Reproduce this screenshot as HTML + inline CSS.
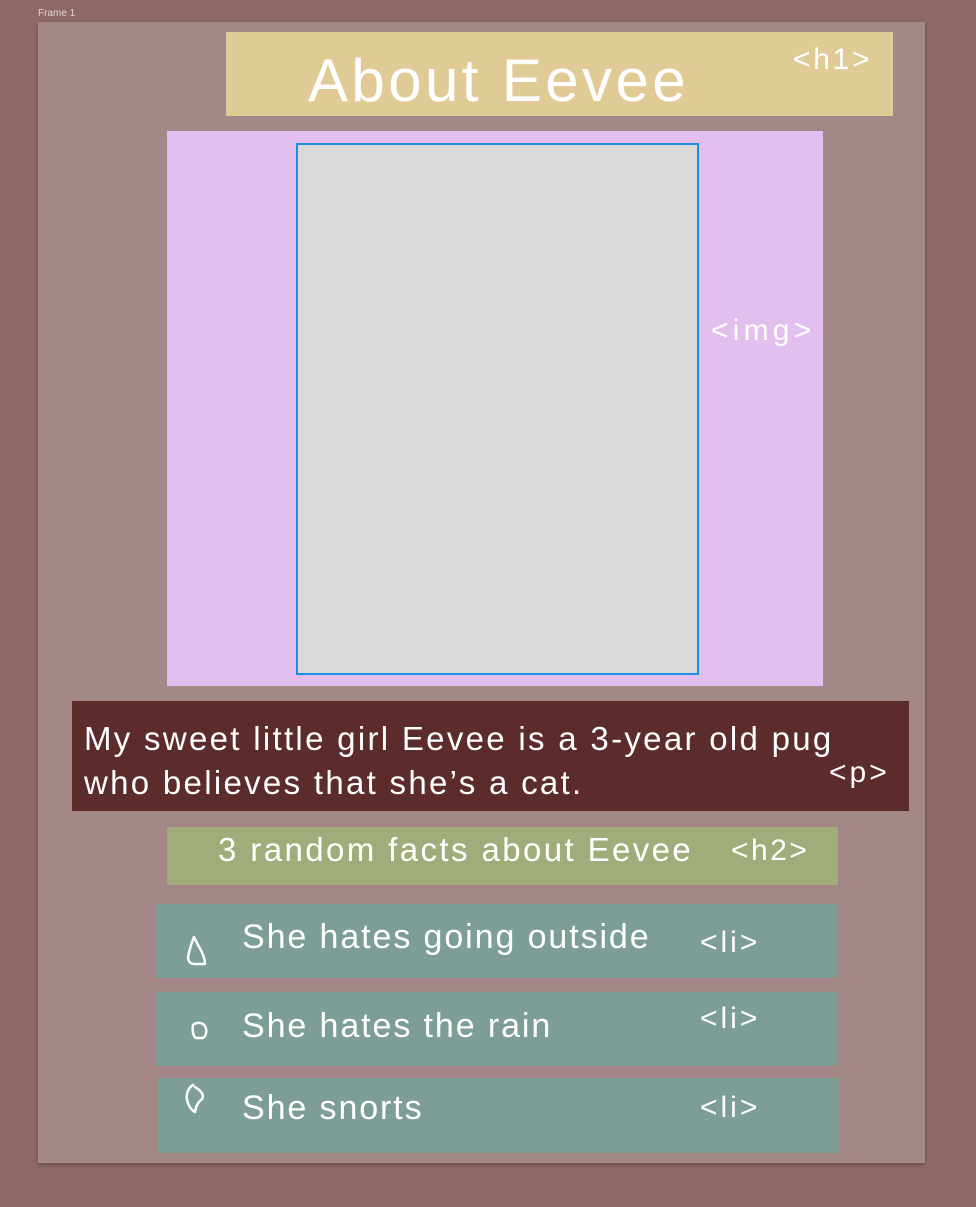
<!DOCTYPE html>
<html><head><meta charset="utf-8"><style>
body{margin:0;width:976px;height:1207px;background:#8d6866;position:relative;overflow:hidden;font-family:"Liberation Sans",sans-serif;color:#fff}
div{position:absolute;box-sizing:border-box}
.t{position:absolute;white-space:nowrap}
</style></head><body>
<div class="t" style="left:38px;top:8px;font-size:10px;color:#e2d3d3">Frame 1</div>
<div style="left:38px;top:22px;width:887px;height:1141px;background:#a48888;box-shadow:0 2px 4px rgba(0,0,0,.25)"></div>
<div style="left:226px;top:32px;width:667px;height:84px;background:#e0cb96"></div>
<div class="t" style="left:308px;top:45px;font-size:60px;line-height:72px;letter-spacing:3.4px">About Eevee</div>
<div class="t" style="left:793px;top:43px;font-size:30px;letter-spacing:2.7px">&lt;h1&gt;</div>
<div style="left:167px;top:131px;width:656px;height:555px;background:#e2bfee"></div>
<div style="left:296px;top:143px;width:403px;height:532px;background:#d9d9d9;border:2px solid #1d8fe0"></div>
<div class="t" style="left:711px;top:314px;font-size:30px;letter-spacing:4.2px">&lt;img&gt;</div>
<div style="left:72px;top:701px;width:837px;height:110px;background:#5c2b2b"></div>
<div class="t" style="left:84px;top:717px;font-size:33px;line-height:44px;letter-spacing:2.3px">My sweet little girl Eevee is a 3-year old pug<br>who believes that she’s a cat.</div>
<div class="t" style="left:829px;top:756px;font-size:30px;letter-spacing:3px">&lt;p&gt;</div>
<div style="left:167px;top:827px;width:671px;height:58px;background:#a1ac7b"></div>
<div class="t" style="left:218px;top:831px;font-size:33px;letter-spacing:2.4px">3 random facts about Eevee</div>
<div class="t" style="left:731px;top:834px;font-size:30px;letter-spacing:2.5px">&lt;h2&gt;</div>
<div style="left:156px;top:904px;width:681px;height:74px;background:#7c9e96"></div>
<div style="left:156px;top:992px;width:681px;height:74px;background:#7c9e96"></div>
<div style="left:158px;top:1078px;width:681px;height:75px;background:#7c9e96"></div>
<div class="t" style="left:242px;top:918px;font-size:34px;letter-spacing:1.9px">She hates going outside</div>
<div class="t" style="left:242px;top:1007px;font-size:34px;letter-spacing:1.9px">She hates the rain</div>
<div class="t" style="left:242px;top:1089px;font-size:34px;letter-spacing:1.9px">She snorts</div>
<div class="t" style="left:700px;top:926px;font-size:30px;letter-spacing:3px">&lt;li&gt;</div>
<div class="t" style="left:700px;top:1002px;font-size:30px;letter-spacing:3px">&lt;li&gt;</div>
<div class="t" style="left:700px;top:1091px;font-size:30px;letter-spacing:3px">&lt;li&gt;</div>
<svg style="position:absolute;left:0;top:0" width="976" height="1207" fill="none" stroke="#fff" stroke-width="2.5" stroke-linejoin="round" stroke-linecap="round">
<path d="M194 937 C191 944 189 952 188 957 C188 962 191 964 195 964 L205 964 C205 958 201 950 198 945 Z"/>
<path d="M193 1025 C196 1022 202 1022 205 1026 C207 1030 207 1035 203 1038 L196 1038 C193 1036 192 1030 193 1025 Z"/>
<path d="M193 1085 C188 1088 186 1094 187 1100 C188 1105 191 1110 195 1112 C196 1107 197 1103 201 1100 C205 1097 202 1092 198 1089 L195 1087"/>
</svg>
</body></html>
